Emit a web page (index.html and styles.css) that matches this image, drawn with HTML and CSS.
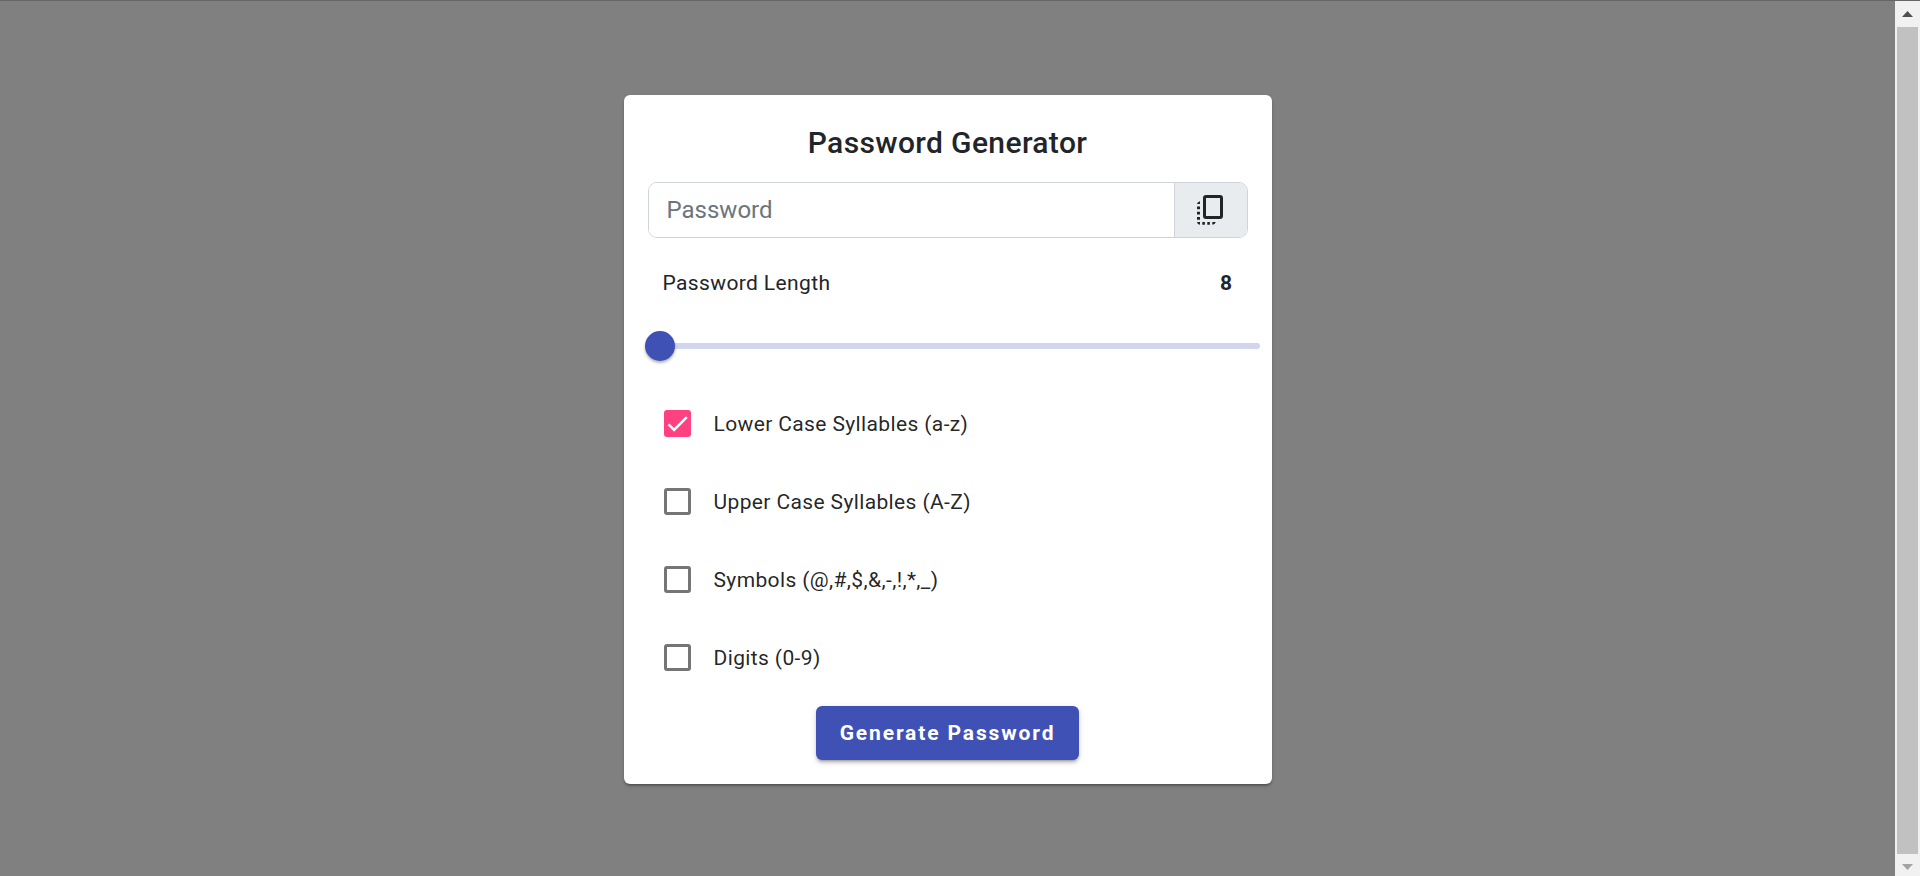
FILE: index.html
```
<!DOCTYPE html>
<html lang="en">
<head>
<meta charset="utf-8">
<title>Password Generator</title>
<link rel="stylesheet" href="styles.css">
</head>
<body>
<div class="page">
  <main class="stage">
    <form class="card">
      <h1 class="title">Password Generator</h1>
      <div class="input-group">
        <input class="password" type="text" placeholder="Password" aria-label="Password" readonly>
        <button class="copy" type="button" aria-label="Copy password">
          <svg width="28" height="30" viewBox="0 0 28 30" fill="currentColor" aria-hidden="true">
            <rect x="7.5" y="1.5" width="17" height="21" rx="1.5" fill="none" stroke="currentColor" stroke-width="3"/>
            <path d="M3 6.3V9H0Q.3 6.8 3 6.3zM0 11.4h3v2.8H0zM0 16.7h3v2.8H0zM0 21.9h3v2.8H0zM0 27h3v2.8Q.3 29.500 0 27zM5.300 27h2.600v2.800H5.300zM10.300 27h2.600v2.800h-2.600zM15.300 27h3.500q-.6 2.500-3.500 2.800z"/>
          </svg>
        </button>
      </div>
      <div class="length">
        <label for="length">Password Length</label>
        <output class="length-value" for="length">8</output>
      </div>
      <input class="slider" id="length" type="range" min="8" max="32" value="8">
      <div class="options">
        <label class="option"><input class="check" type="checkbox" checked><svg class="tick" viewBox="0 0 27 27" aria-hidden="true"><path d="M4.500 14.300l5.600 5.600L22.800 7.200" fill="none" stroke="#fff" stroke-width="2.500"/></svg><span>Lower Case Syllables (a-z)</span></label>
        <label class="option"><input class="check" type="checkbox"><span>Upper Case Syllables (A-Z)</span></label>
        <label class="option"><input class="check" type="checkbox"><span>Symbols (@,#,$,&amp;,-,!,*,_)</span></label>
        <label class="option"><input class="check" type="checkbox"><span>Digits (0-9)</span></label>
      </div>
      <button class="generate" type="button">Generate Password</button>
    </form>
  </main>
  <div class="scrollbar" aria-hidden="true">
    <svg class="arrow" width="11" height="6" viewBox="0 0 11 6"><path d="M5.500 0L11 6H0z" fill="#505050"/></svg>
    <div class="scroll-thumb"></div>
    <svg class="arrow" width="11" height="6" viewBox="0 0 11 6"><path d="M0 0h11L5.500 6z" fill="#a3a3a3"/></svg>
  </div>
</div>
</body>
</html>
```
FILE: styles.css
```
* {
  box-sizing: border-box;
}

body {
  margin: 0;
  font-family: Roboto, "Liberation Sans", sans-serif;
  font-size: 21px;
  color: #212529;
  background: #808080;
}

.page {
  display: flex;
  min-height: 100vh;
  border-top: 1px solid #666;
}

.stage {
  flex: 1;
  display: flex;
  justify-content: center;
  align-items: flex-start;
  padding: 94px 24px 24px;
}

.card {
  display: flex;
  flex-direction: column;
  width: 100%;
  max-width: 648px;
  padding: 24px;
  border-radius: 6px;
  background: #fff;
  box-shadow: 0 3px 2px -2px rgba(0, 0, 0, 0.2), 0 2px 2px rgba(0, 0, 0, 0.14), 0 2px 5px rgba(0, 0, 0, 0.12);
}

.title {
  margin: 0 0 15px;
  font-size: 30px;
  font-weight: 500;
  line-height: 48px;
  letter-spacing: 0.0125em;
  text-align: center;
}

.input-group {
  display: flex;
  height: 56px;
  border: 1px solid #ced4da;
  border-radius: 9px;
  overflow: hidden;
}

.password {
  flex: 1;
  min-width: 0;
  padding: 0 18px;
  border: 0;
  font: inherit;
  font-size: 24px;
  color: inherit;
  background: #fff;
}

.password::placeholder {
  color: #6c757d;
  opacity: 1;
}

.copy {
  display: flex;
  align-items: center;
  justify-content: center;
  width: 73px;
  padding: 0;
  border: 0;
  border-left: 1px solid #ced4da;
  color: #212529;
  background: #e9ecef;
}

.length {
  display: flex;
  justify-content: space-between;
  margin-top: 27px;
  padding: 0 15px;
  line-height: 36px;
  letter-spacing: 0.0178em;
}

.length-value {
  font-weight: 700;
}

.slider {
  appearance: none;
  height: 30px;
  margin: 30px -12px 33px -3px;
  background: none;
}

.slider::-webkit-slider-runnable-track {
  height: 6px;
  border-radius: 3px;
  background: linear-gradient(90deg, transparent 15px, #d1d5ed 15px);
}

.slider::-webkit-slider-thumb {
  appearance: none;
  width: 30px;
  height: 30px;
  margin-top: -12px;
  border-radius: 50%;
  background: #3f51b5;
  box-shadow: 0 2px 3px rgba(0, 0, 0, 0.3);
}

.options {
  display: grid;
  gap: 18px;
}

.option {
  position: relative;
  display: flex;
  align-items: center;
  gap: 23px;
  height: 60px;
  padding-left: 16px;
  color: rgba(0, 0, 0, 0.87);
  letter-spacing: 0.0178em;
}

.check {
  appearance: none;
  width: 27px;
  height: 27px;
  margin: 0 0 1px;
  border: 3px solid #757575;
  border-radius: 3px;
}

.check:checked {
  border-color: #ff4081;
  background: #ff4081;
}

.tick {
  position: absolute;
  top: 16px;
  left: 16px;
  width: 27px;
  height: 27px;
  pointer-events: none;
}

.check:not(:checked) + .tick {
  display: none;
}

.generate {
  align-self: center;
  height: 54px;
  margin-top: 18px;
  padding: 0 24px;
  border: 0;
  border-radius: 6px;
  font: inherit;
  font-weight: 700;
  letter-spacing: 0.0892857em;
  color: #fff;
  background: #3f51b5;
  box-shadow: 0 4px 2px -3px rgba(0, 0, 0, 0.2), 0 3px 3px rgba(0, 0, 0, 0.14), 0 2px 7px rgba(0, 0, 0, 0.12);
}

.scrollbar {
  display: flex;
  flex-direction: column;
  align-items: center;
  gap: 10px;
  width: 25px;
  padding: 10px 2px 6px;
  background: #f1f1f1;
}

.scroll-thumb {
  flex: 1;
  width: 100%;
  background: #c1c1c1;
}
```
